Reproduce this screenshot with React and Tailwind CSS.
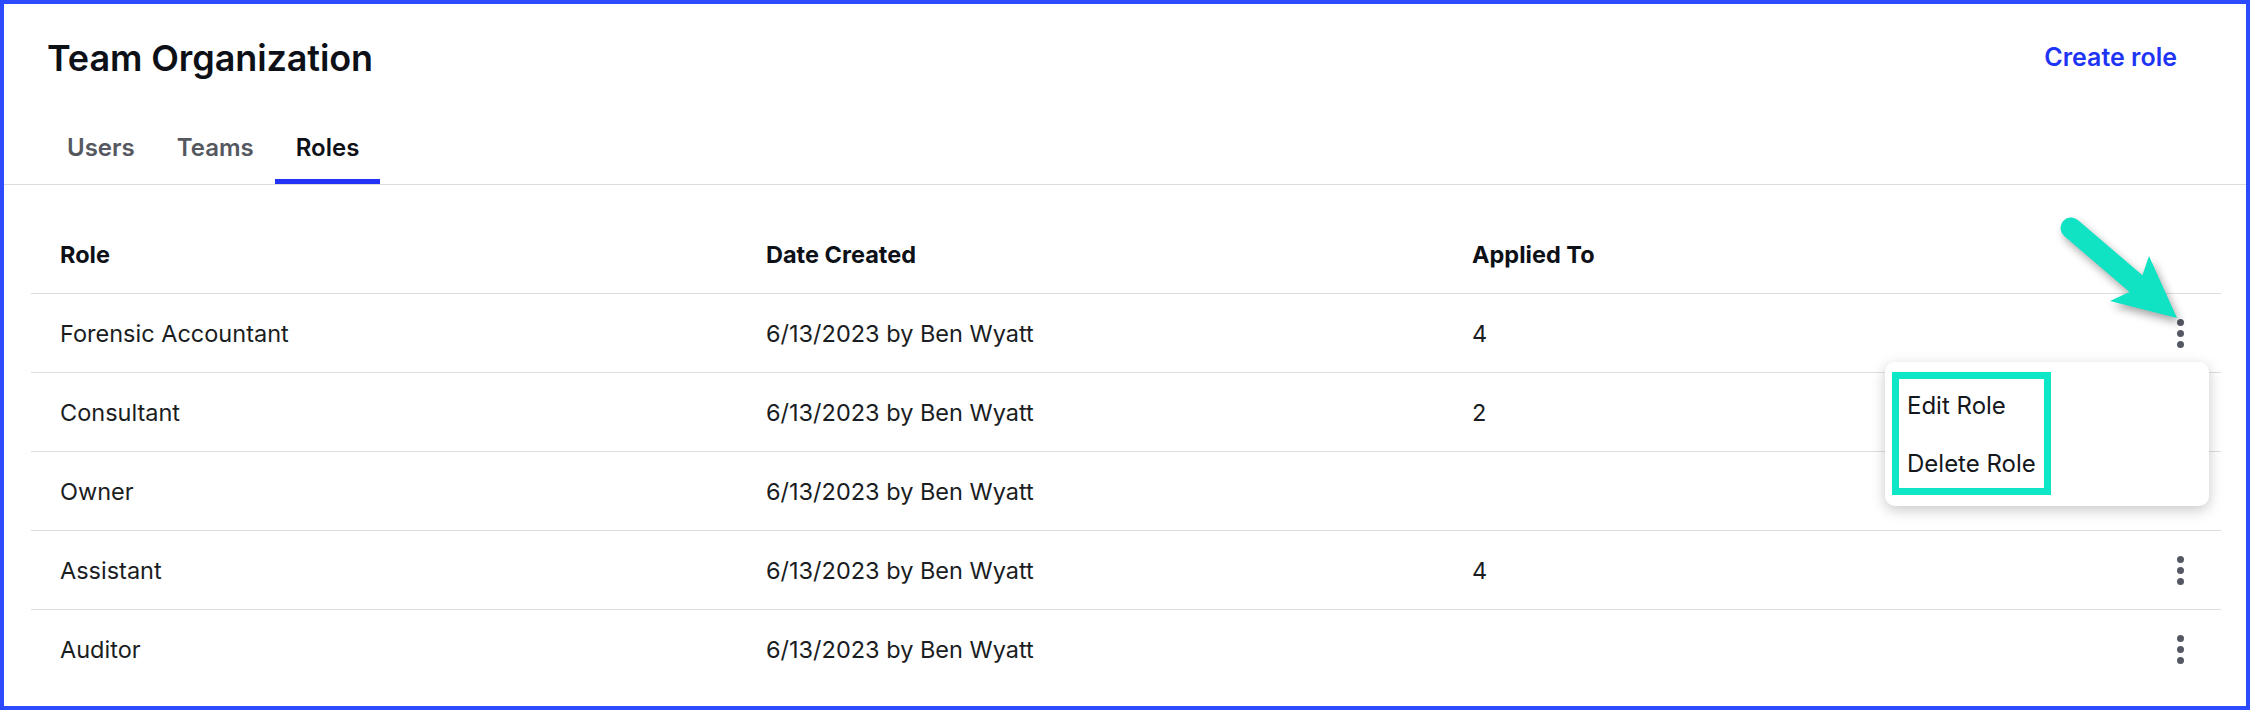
import React from "react";

const rows = [
  { role: "Forensic Accountant", date: "6/13/2023 by Ben Wyatt", applied: "4", kebab: true },
  { role: "Consultant", date: "6/13/2023 by Ben Wyatt", applied: "2", kebab: false },
  { role: "Owner", date: "6/13/2023 by Ben Wyatt", applied: "", kebab: false },
  { role: "Assistant", date: "6/13/2023 by Ben Wyatt", applied: "4", kebab: true },
  { role: "Auditor", date: "6/13/2023 by Ben Wyatt", applied: "", kebab: true },
];

function Kebab() {
  return (
    <div className="flex flex-col gap-[4px]">
      <span className="block w-[7px] h-[7px] rounded-full bg-[#545862]" />
      <span className="block w-[7px] h-[7px] rounded-full bg-[#545862]" />
      <span className="block w-[7px] h-[7px] rounded-full bg-[#545862]" />
    </div>
  );
}

export default function App() {
  return (
    <div
      className="relative w-[2250px] h-[710px] border-4 border-[#2c4bff] bg-white text-[#14171c] overflow-hidden"
      style={{ fontFamily: "Inter, 'Noto Sans', sans-serif" }}
    >
      {/* Header */}
      <div className="flex items-center justify-between h-[108px] pl-[43px] pr-[69px]">
        <h1 className="text-[36px] font-semibold text-[#0d1117] tracking-[-0.1px]">Team Organization</h1>
        <button className="text-[25px] font-semibold text-[#1f35f5]">Create role</button>
      </div>

      {/* Tabs */}
      <div className="flex h-[73px] pl-[42px] border-b border-[#dcdcdc]">
        <div className="flex items-center h-[72px] px-[21px] text-[24px] font-semibold text-[#55585f]">Users</div>
        <div className="flex items-center h-[72px] px-[21px] text-[24px] font-semibold text-[#55585f]">Teams</div>
        <div className="flex items-center h-[72px] px-[21px] text-[24px] font-semibold text-[#0d1117] border-b-[5px] border-[#2233f5] pt-[5px]">Roles</div>
      </div>

      {/* Table */}
      <div className="mt-[29px] ml-[27px] mr-[25px]">
        <div className="grid grid-cols-[706px_706px_706px_1fr] h-[79px] items-center pt-[2px] text-[23.5px] font-bold text-[#0d1117]">
          <div className="pl-[29px]">Role</div>
          <div className="pl-[29px]">Date Created</div>
          <div className="pl-[29px]">Applied To</div>
          <div />
        </div>
        {rows.map((r) => (
          <div
            key={r.role}
            className="grid grid-cols-[706px_706px_706px_1fr] h-[79px] items-center border-t border-[#dedede] text-[23.5px] text-[#1a1d22]"
          >
            <div className="pl-[29px] pt-[2px]">{r.role}</div>
            <div className="pl-[29px] pt-[2px]">{r.date}</div>
            <div className="pl-[29px] pt-[2px]">{r.applied}</div>
            <div className="flex justify-end pr-[37px]">{r.kebab && <Kebab />}</div>
          </div>
        ))}
      </div>

      {/* Dropdown menu */}
      <div className="absolute left-[1881px] top-[358px] w-[324px] h-[144px] rounded-[10px] bg-white shadow-[0_4px_14px_rgba(0,0,0,0.22)] pl-[7px] pt-[10px]">
        <div className="w-[159px] h-[123px] border-[7px] border-[#0de6c7] flex flex-col justify-center gap-[34px] pl-[8px] pt-[2px] text-[24px] text-[#14171c]">
          <div className="leading-[24px]">Edit Role</div>
          <div className="leading-[24px]">Delete Role</div>
        </div>
      </div>

      {/* Annotation arrow */}
      <svg
        className="absolute left-[2026px] top-[196px]"
        width="170"
        height="140"
        viewBox="0 0 170 140"
        style={{ filter: "drop-shadow(3px 5px 4px rgba(0,0,0,0.35))" }}
      >
        <line x1="41" y1="28" x2="110" y2="87" stroke="#0fe3c4" strokeWidth="21" strokeLinecap="round" />
        <path d="M147 118 L119 56 L108 88 L80 101 Z" fill="#0fe3c4" />
      </svg>
    </div>
  );
}
